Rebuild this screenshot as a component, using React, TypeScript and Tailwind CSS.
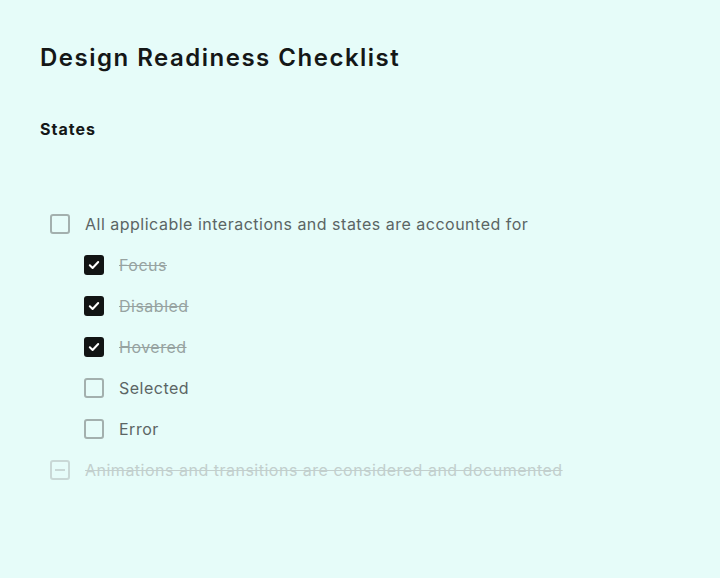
import React from "react";

type Item = {
  label: string;
  state: "checked" | "unchecked" | "indeterminate";
  done?: boolean;
  disabled?: boolean;
};

const Box = ({ state, disabled }: { state: Item["state"]; disabled?: boolean }) => {
  if (state === "checked") {
    return (
      <span className="flex h-5 w-5 shrink-0 items-center justify-center rounded-[3px] bg-[#111414]">
        <svg width="14" height="14" viewBox="0 0 14 14" fill="none">
          <path d="M2.8 7.2l2.8 2.8 5.6-6" stroke="#fff" strokeWidth="2" strokeLinecap="round" strokeLinejoin="round" />
        </svg>
      </span>
    );
  }
  if (state === "indeterminate") {
    return (
      <span className="flex h-5 w-5 shrink-0 items-center justify-center rounded-[3px] border-2 border-[#c9d8d6]">
        <span className="h-[2px] w-[10px] bg-[#c9d8d6]" />
      </span>
    );
  }
  return (
    <span
      className={
        "h-5 w-5 shrink-0 rounded-[3px] border-2 " +
        (disabled ? "border-[#c9d8d6]" : "border-[#a3b0ae]")
      }
    />
  );
};

const Row = ({ item, nested }: { item: Item; nested?: boolean }) => {
  let text = "text-[#5b6564]";
  if (item.done) text = "text-[#97a3a1] line-through";
  if (item.disabled) text = "text-[#c2cfcd] line-through";
  return (
    <div className={"flex h-[41px] items-center gap-[15px] " + (nested ? "pl-[44px]" : "pl-[10px]")}>
      <Box state={item.state} disabled={item.disabled} />
      <span className={"text-[16px] tracking-[0.5px] " + text}>{item.label}</span>
    </div>
  );
};

const subItems: Item[] = [
  { label: "Focus", state: "checked", done: true },
  { label: "Disabled", state: "checked", done: true },
  { label: "Hovered", state: "checked", done: true },
  { label: "Selected", state: "unchecked" },
  { label: "Error", state: "unchecked" },
];

export default function App() {
  return (
    <div className="min-h-[578px] w-full bg-[#e6fcf9] px-[40px] pt-[40px] font-['Inter',sans-serif]">
      <h1 className="text-[24px] font-semibold leading-[36px] tracking-[1.5px] text-[#141717]">
        Design Readiness Checklist
      </h1>
      <h2 className="mt-[41px] text-[16px] font-bold leading-[24px] tracking-[1px] text-[#141717]">States</h2>
      <div className="mt-[62px] flex flex-col">
        <Row item={{ label: "All applicable interactions and states are accounted for", state: "unchecked" }} />
        {subItems.map((s) => (
          <Row key={s.label} item={s} nested />
        ))}
        <Row
          item={{
            label: "Animations and transitions are considered and documented",
            state: "indeterminate",
            disabled: true,
          }}
        />
      </div>
    </div>
  );
}
